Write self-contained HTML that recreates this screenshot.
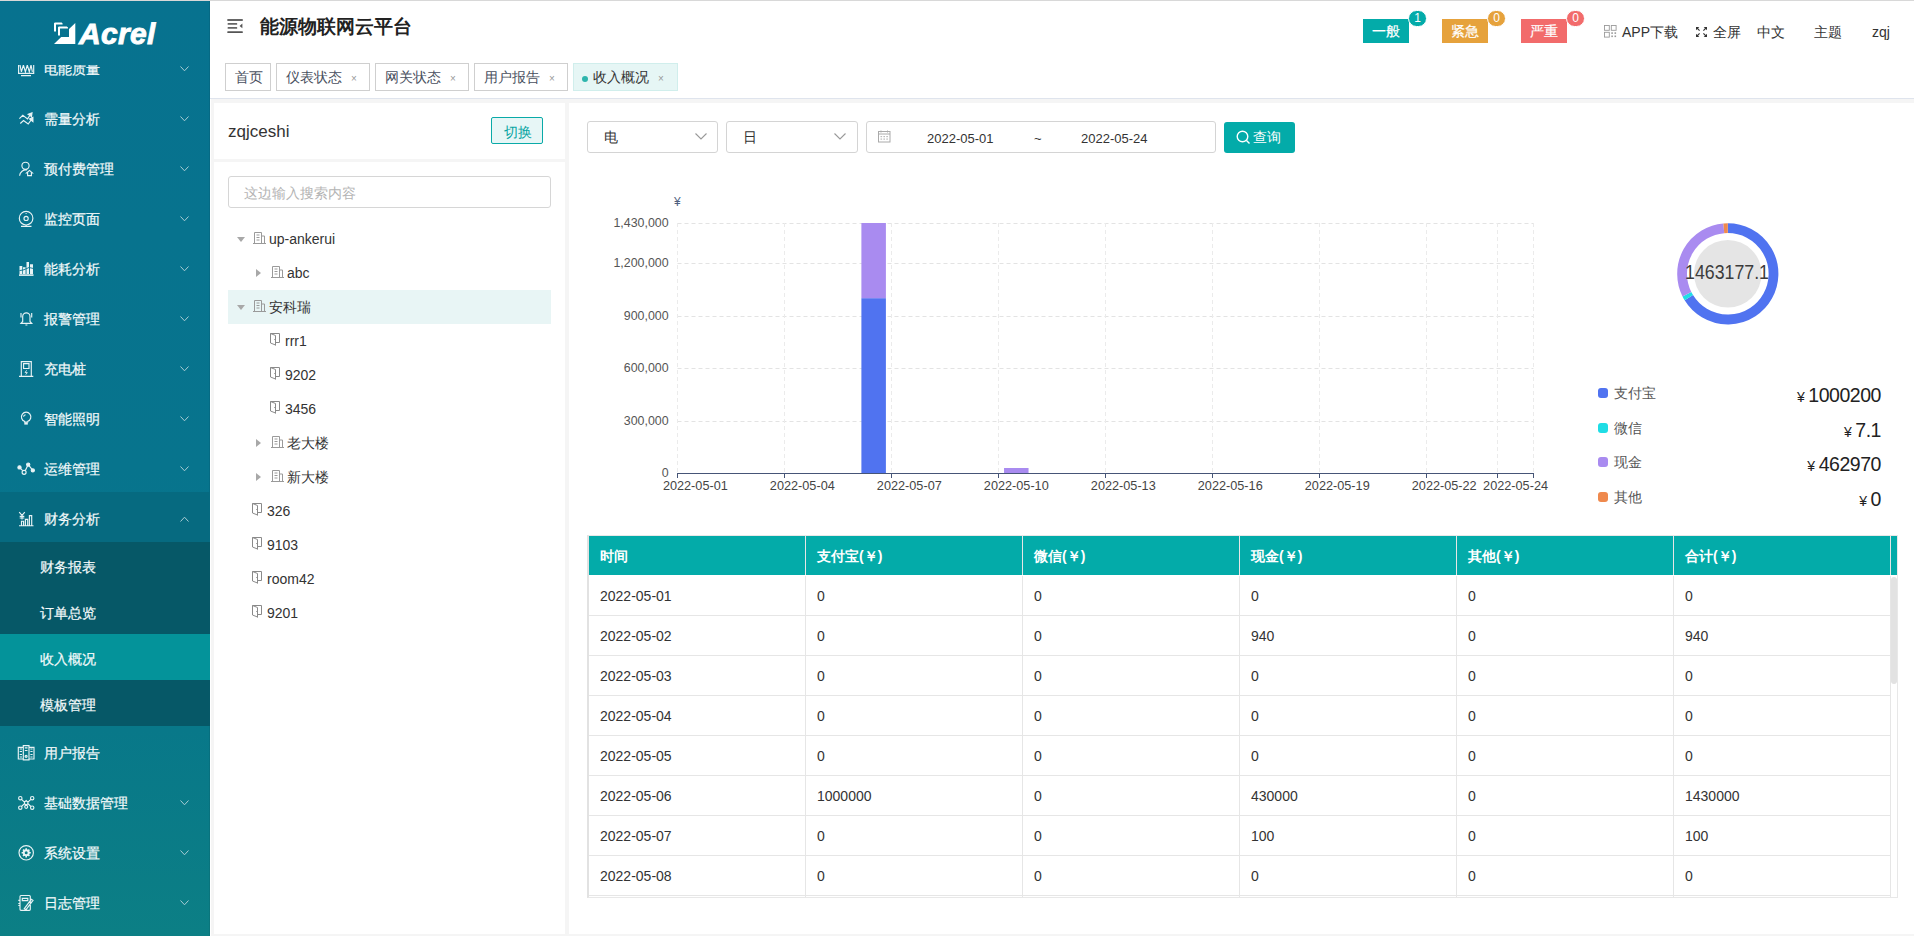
<!DOCTYPE html>
<html><head><meta charset="utf-8">
<style>
*{box-sizing:border-box;margin:0;padding:0}
html,body{width:1914px;height:936px;overflow:hidden}
body{position:relative;background:#f5f5f5;font-family:"Liberation Sans",sans-serif;font-size:14px;color:#333}
.abs{position:absolute}
#topline{left:0;top:0;width:1914px;height:1px;background:#d8d8d8;z-index:5}
/* sidebar */
#side{left:0;top:0;width:210px;height:936px;background:linear-gradient(180deg,#07728f 0%,#07748d 50%,#087889 78%,#0c7f85 100%);overflow:hidden}
#side .edge{right:0;top:0;width:1px;height:936px;background:rgba(0,0,0,0.07)}
.logo{left:54px;top:22px}
.menu{left:0;top:65px;width:210px;height:871px;overflow:hidden}
.mi{position:absolute;left:0;width:210px;height:50px;color:#f4fafb;-webkit-text-stroke:0.2px #f4fafb}
.mi .tx{position:absolute;left:44px;top:2px;line-height:50px;font-size:14px}
.mi svg.ic{position:absolute;left:16px;top:16px}
.mi .chev{position:absolute;left:180px;top:24px;width:9px;height:6px}
.sub{position:absolute;left:0;width:210px;height:46px;background:#065867;color:#f4fafb;-webkit-text-stroke:0.2px #f4fafb}
.sub .tx{position:absolute;left:40px;top:2px;line-height:46px;font-size:14px}
/* header */
#hdr{left:210px;top:0;width:1704px;height:99px;background:#fff;border-bottom:1px solid #dfe4ed}
.title{left:50px;top:14px;font-size:19px;font-weight:bold;color:#222;line-height:26px}
.tab{position:absolute;top:63px;height:28px;border:1px solid #cfcfcf;background:#fff;font-size:14px;color:#495060;line-height:26px;padding-left:9px}
.tab .x{position:absolute;font-size:10px;color:#999;top:1.5px}
.badge{position:absolute;top:19px;width:46px;height:24px;color:#fff;font-size:14px;line-height:24px;text-align:center;-webkit-text-stroke:0.2px #fff}
.cnt{position:absolute;top:10px;width:19px;height:17px;border-radius:9px;border:1px solid #fff;color:#fff;font-size:12px;line-height:15px;text-align:center}
.hr{position:absolute;top:22px;font-size:14px;color:#333;line-height:20px}
/* panels */
.pnl{position:absolute;background:#fff}
.tree{position:absolute;left:228px;width:323px;height:34px;line-height:34px;font-size:14px;color:#333}
.tree .car{position:absolute;top:15px;width:0;height:0}
.car.dn{border-left:4px solid transparent;border-right:4px solid transparent;border-top:5px solid #a8a8a8}
.car.rt{border-top:4px solid transparent;border-bottom:4px solid transparent;border-left:5px solid #a8a8a8}

.tree .t{position:absolute;top:0}
.sel{position:absolute;top:121px;height:32px;border:1px solid #d4d4d4;border-radius:3px;background:#fff}
.sel .v{position:absolute;left:16px;top:0;line-height:30px;font-size:14px;color:#333}
.lg{position:absolute;left:1598px;width:10px;height:10px;border-radius:3px}
.lgt{position:absolute;left:1614px;font-size:14px;color:#555;line-height:20px}
.lgv{position:absolute;right:33px;font-size:19.5px;letter-spacing:-0.45px;color:#222;line-height:24px;text-align:right}
.lgv small{font-size:14px;margin-right:3.5px;letter-spacing:0}
/* table */
#tbl{left:587px;top:535px;width:1311px;height:363px;border:1px solid #e8e8e8;border-left:2px solid #e2e2e2;background:#fff;overflow:hidden}
.th{position:absolute;top:0;height:39px;background:#03aba9;color:#fff;font-weight:bold;font-size:14px;line-height:40px;padding-left:11px}
.td{position:absolute;height:40px;line-height:41px;font-size:14px;color:#333;padding-left:11px;border-bottom:1px solid #e6e6e6;border-right:1px solid #e6e6e6}
</style></head>
<body>
<div id="topline" class="abs"></div>

<!-- SIDEBAR -->
<div id="side" class="abs">
  <div class="edge abs"></div>
  <svg class="logo abs" width="106" height="24" viewBox="0 0 106 24">
    <g fill="#fff">
      <path d="M0 9.5V1.2L0.8 0.5H7.6L8.6 1.6V2.5H2V9.5Z"></path>
      <path d="M4 13.5V5.2L4.8 4.5H12.8L14 5.6V6.5H6V13.5Z"></path>
      <path d="M0 22L7.2 15H15V7L21.3 1V22Z"></path>
    </g>
    <text x="25" y="21.6" font-family="Liberation Sans" font-weight="bold" font-style="italic" font-size="30" fill="#fff" stroke="#fff" stroke-width="0.9" letter-spacing="0.3">Acrel</text>
  </svg>
  <div class="menu abs" id="menu"><div class="mi" style="top:-23px;"><svg class="ic" width="20" height="20" viewBox="0 0 20 20"><g fill="none" stroke="#e8f3f5" stroke-width="1.15"><path d="M2.6 6V15.4H17.7V6M3.9 6.5L5.4 13.8 7.4 7 9.4 13.8 11.3 7 13.3 13.8 15 7 16.4 13.8M5 17.6H15"></path></g></svg><span class="tx">电能质量</span><svg class="chev" viewBox="0 0 9 6"><path d="M0.5 0.5L4.5 4.8L8.5 0.5" fill="none" stroke="#a9cdd4" stroke-width="1"></path></svg></div><div class="mi" style="top:27px;"><svg class="ic" width="20" height="20" viewBox="0 0 20 20"><g fill="none" stroke="#e8f3f5" stroke-width="1.15"><path d="M3.4 10.7L6.8 7.3 11.5 10.9 14 7.2M4.3 15.5L7.5 12.5 12.2 16 15.2 11.8"></path><path d="M12.2 6.3L16 4.8 15.5 8.6ZM13.5 11L16.9 9.5 16.9 13.5Z" fill="#e8f3f5"></path></g></svg><span class="tx">需量分析</span><svg class="chev" viewBox="0 0 9 6"><path d="M0.5 0.5L4.5 4.8L8.5 0.5" fill="none" stroke="#a9cdd4" stroke-width="1"></path></svg></div><div class="mi" style="top:77px;"><svg class="ic" width="20" height="20" viewBox="0 0 20 20"><g fill="none" stroke="#e8f3f5" stroke-width="1.15"><circle cx="9.5" cy="7.8" r="3.6"></circle><path d="M3.6 17.8A6.4 6.4 0 0 1 11 12M10.6 15L13.5 12.4 16.4 15H15.4V17.6H11.6V15Z"></path></g></svg><span class="tx">预付费管理</span><svg class="chev" viewBox="0 0 9 6"><path d="M0.5 0.5L4.5 4.8L8.5 0.5" fill="none" stroke="#a9cdd4" stroke-width="1"></path></svg></div><div class="mi" style="top:127px;"><svg class="ic" width="20" height="20" viewBox="0 0 20 20"><g fill="none" stroke="#e8f3f5" stroke-width="1.15"><circle cx="10.1" cy="10.2" r="6.8"></circle><circle cx="10.1" cy="10.4" r="2.1"></circle><path d="M5 18.4H15.5M10.1 17V18.4M9.6 5.5H10.6"></path></g></svg><span class="tx">监控页面</span><svg class="chev" viewBox="0 0 9 6"><path d="M0.5 0.5L4.5 4.8L8.5 0.5" fill="none" stroke="#a9cdd4" stroke-width="1"></path></svg></div><div class="mi" style="top:177px;"><svg class="ic" width="20" height="20" viewBox="0 0 20 20"><g fill="none" stroke="#e8f3f5" stroke-width="1.15"><path d="M3.5 8H6.3V16H3.5ZM7 9.3H9.6V16H7ZM10.5 4H13V16H10.5ZM14 6.3H17V16H14Z" fill="#e8f3f5" stroke="none"></path><path d="M3 17.1H17.5" stroke-width="1.6"></path><path d="M3.5 12.6L7 12 9.7 11 13 9.5 17 10.4" stroke="#07738e" stroke-width="0.9"></path></g></svg><span class="tx">能耗分析</span><svg class="chev" viewBox="0 0 9 6"><path d="M0.5 0.5L4.5 4.8L8.5 0.5" fill="none" stroke="#a9cdd4" stroke-width="1"></path></svg></div><div class="mi" style="top:227px;"><svg class="ic" width="20" height="20" viewBox="0 0 20 20"><g fill="none" stroke="#e8f3f5" stroke-width="1.15"><path d="M5 15.3H15.7L14 13.5V8.5A3.6 3.6 0 0 0 6.7 8.5V13.5ZM9.4 17H11.4M5 5V9.5M15.7 5V9.5"></path></g></svg><span class="tx">报警管理</span><svg class="chev" viewBox="0 0 9 6"><path d="M0.5 0.5L4.5 4.8L8.5 0.5" fill="none" stroke="#a9cdd4" stroke-width="1"></path></svg></div><div class="mi" style="top:277px;"><svg class="ic" width="20" height="20" viewBox="0 0 20 20"><g fill="none" stroke="#e8f3f5" stroke-width="1.15"><path d="M5.3 18.3V3.6H15.3V18.3M3 18.4H17.3M7.6 5.6H13V10.5H7.6Z"></path><path d="M10.6 12.3L9.1 14.6H11.3L9.8 16.6" stroke-width="0.9"></path></g></svg><span class="tx">充电桩</span><svg class="chev" viewBox="0 0 9 6"><path d="M0.5 0.5L4.5 4.8L8.5 0.5" fill="none" stroke="#a9cdd4" stroke-width="1"></path></svg></div><div class="mi" style="top:327px;"><svg class="ic" width="20" height="20" viewBox="0 0 20 20"><g fill="none" stroke="#e8f3f5" stroke-width="1.15"><path d="M8.5 14V13.3A4.7 4.7 0 1 1 11.8 13.3V14Z"></path><rect x="8.3" y="14.2" width="3.5" height="2.4" fill="#e8f3f5" stroke="none"></rect><path d="M7.5 8.6A2.6 2.6 0 0 1 9.6 6.7"></path></g></svg><span class="tx">智能照明</span><svg class="chev" viewBox="0 0 9 6"><path d="M0.5 0.5L4.5 4.8L8.5 0.5" fill="none" stroke="#a9cdd4" stroke-width="1"></path></svg></div><div class="mi" style="top:377px;"><svg class="ic" width="20" height="20" viewBox="0 0 20 20"><g fill="none" stroke="#e8f3f5" stroke-width="1.15"><path d="M3.5 9.4L6.7 12.7M9.2 12.8L12.2 6.6 16.8 12.3"></path><circle cx="3.5" cy="9.4" r="1.6" fill="#e8f3f5"></circle><circle cx="8.1" cy="14.3" r="2"></circle><circle cx="12.2" cy="6.6" r="1.6" fill="#e8f3f5"></circle><circle cx="16.8" cy="12.3" r="1.6" fill="#e8f3f5"></circle></g></svg><span class="tx">运维管理</span><svg class="chev" viewBox="0 0 9 6"><path d="M0.5 0.5L4.5 4.8L8.5 0.5" fill="none" stroke="#a9cdd4" stroke-width="1"></path></svg></div><div class="mi" style="top:427px;background:#066a80;"><svg class="ic" width="20" height="20" viewBox="0 0 20 20"><g fill="none" stroke="#e8f3f5" stroke-width="1.15"><path d="M3 17.7H17.5M5.5 17.5V13.2H7.6V17.5M9.4 17.5V11.3H11.7V17.5M13.4 17.5V7.6H15.7V17.5M3.2 4.2L6 7.3 8.8 4.2M6 7.3V11.5M3.7 8.3H8.3M3.7 10H8.3"></path></g></svg><span class="tx">财务分析</span><svg class="chev" viewBox="0 0 9 6"><path d="M0.5 5.5L4.5 1.2L8.5 5.5" fill="none" stroke="#a9cdd4" stroke-width="1"></path></svg></div><div class="mi" style="top:661px;"><svg class="ic" width="20" height="20" viewBox="0 0 20 20"><g fill="none" stroke="#e8f3f5" stroke-width="1.15"><path d="M2.3 5.3H7.3V17H2.3ZM7.3 3.6H13V17.8H7.3ZM13 5.3H18V17H13ZM8.8 5.8H11.5M8.8 8.5H11.5M3.7 7H6M14.4 7H16.6M3.7 9.5H6M14.4 9.5H16.6M3.7 12.5H6M14.4 12.5H16.6M3.7 15H6M14.4 15H16.6"></path><circle cx="10.1" cy="14.3" r="1"></circle></g></svg><span class="tx">用户报告</span></div><div class="mi" style="top:711px;"><svg class="ic" width="20" height="20" viewBox="0 0 20 20"><g fill="none" stroke="#e8f3f5" stroke-width="1.15"><circle cx="4.3" cy="6.2" r="1.7"></circle><circle cx="16.2" cy="6.2" r="1.7"></circle><circle cx="4.3" cy="15.7" r="1.7"></circle><circle cx="16.2" cy="15.7" r="1.7"></circle><circle cx="10.2" cy="14.8" r="1.5"></circle><path d="M5.5 7.4L8.5 10.2M14.9 7.4L11.9 10.2M5.5 14.5L8.5 11.6M14.9 14.5L11.9 11.6M8.5 10.2L10.2 8.6 11.9 10.2 11.9 11.6 10.2 13.2 8.5 11.6Z"></path></g></svg><span class="tx">基础数据管理</span><svg class="chev" viewBox="0 0 9 6"><path d="M0.5 0.5L4.5 4.8L8.5 0.5" fill="none" stroke="#a9cdd4" stroke-width="1"></path></svg></div><div class="mi" style="top:761px;"><svg class="ic" width="20" height="20" viewBox="0 0 20 20"><g fill="none" stroke="#e8f3f5" stroke-width="1.15"><circle cx="10.2" cy="10.8" r="7.2"></circle><circle cx="10.2" cy="10.8" r="2.5" stroke-width="2"></circle><path d="M10.2 6.2V8.2M10.2 13.4V15.4M5.6 10.8H7.6M12.8 10.8H14.8M7 7.6L8.4 9M12 12.6L13.4 14M13.4 7.6L12 9M7 14L8.4 12.6" stroke-width="1.6"></path></g></svg><span class="tx">系统设置</span><svg class="chev" viewBox="0 0 9 6"><path d="M0.5 0.5L4.5 4.8L8.5 0.5" fill="none" stroke="#a9cdd4" stroke-width="1"></path></svg></div><div class="mi" style="top:811px;"><svg class="ic" width="20" height="20" viewBox="0 0 20 20"><g fill="none" stroke="#e8f3f5" stroke-width="1.15"><path d="M4 4.5A1 1 0 0 1 5 3.5H13.3A1 1 0 0 1 14.3 4.5V17.3A1 1 0 0 1 13.3 18.3H5A1 1 0 0 1 4 17.3ZM6.3 6.3H11.8V8.6H6.3ZM2.3 8.3H4.5M2.3 11.5H4.5M2.3 13.5H4.5M8.3 16.6L15.3 7.3 17 8.4 10 17.7Z"></path></g></svg><span class="tx">日志管理</span><svg class="chev" viewBox="0 0 9 6"><path d="M0.5 0.5L4.5 4.8L8.5 0.5" fill="none" stroke="#a9cdd4" stroke-width="1"></path></svg></div><div class="sub" style="top:477px;"><span class="tx">财务报表</span></div><div class="sub" style="top:523px;"><span class="tx">订单总览</span></div><div class="sub" style="top:569px;background:#04939a;"><span class="tx">收入概况</span></div><div class="sub" style="top:615px;"><span class="tx">模板管理</span></div></div>
</div>

<!-- HEADER -->
<div id="hdr" class="abs">
  <svg class="abs" style="left:17px;top:19px" width="17" height="15" viewBox="0 0 17 15">
    <g fill="#666"><rect x="0.3" y="0.1" width="15.5" height="1.8" rx="0.5"></rect><rect x="0.6" y="4.1" width="9.6" height="1.7" rx="0.5"></rect><rect x="0.6" y="8.1" width="9.6" height="1.7" rx="0.5"></rect><rect x="0.3" y="12.2" width="15.5" height="1.8" rx="0.5" fill="#555"></rect><path d="M12.6 6.9L15.4 4.4V9.3Z" fill="#555"></path></g>
  </svg>
  <div class="title abs">能源物联网云平台</div>
  <div class="tab" style="left:15px;width:46px">首页</div>
  <div class="tab" style="left:66px;width:94px">仪表状态<span class="x" style="left:74px">×</span></div>
  <div class="tab" style="left:165px;width:94px">网关状态<span class="x" style="left:74px">×</span></div>
  <div class="tab" style="left:264px;width:94px">用户报告<span class="x" style="left:74px">×</span></div>
  <div class="tab" style="left:363px;width:105px;background:#e6f6f5;border-color:#d0eeec;color:#333;padding-left:19px"><span class="abs" style="left:8px;top:12px;width:6px;height:6px;border-radius:3px;background:#2fb5ad"></span>收入概况<span class="x" style="left:84px">×</span></div>

  <div class="badge" style="left:1153px;background:#03aba9">一般</div>
  <div class="cnt" style="left:1198px;background:#03aba9">1</div>
  <div class="badge" style="left:1232px;background:#e6a23c">紧急</div>
  <div class="cnt" style="left:1277px;background:#e6a23c">0</div>
  <div class="badge" style="left:1311px;background:#f26b6b">严重</div>
  <div class="cnt" style="left:1356px;background:#f26b6b">0</div>

  <svg class="abs" style="left:1394px;top:25px" width="13" height="13" viewBox="0 0 13 13"><g fill="none" stroke="#9a9a9a" stroke-width="0.9"><rect x="0.5" y="0.5" width="4.8" height="4.8"></rect><rect x="7.3" y="0.5" width="4.8" height="4.8"></rect><rect x="0.5" y="7.3" width="4.8" height="4.8"></rect></g><g fill="#9a9a9a"><rect x="7.3" y="7.3" width="1.6" height="1.6"></rect><rect x="10.5" y="7.3" width="1.6" height="1.6"></rect><rect x="7.3" y="10.5" width="1.6" height="1.6"></rect><rect x="10.5" y="10.5" width="1.6" height="1.6"></rect></g></svg>
  <div class="hr" style="left:1412px">APP下载</div>
  <svg class="abs" style="left:1486px;top:27px" width="11" height="10" viewBox="0 0 11 10"><g fill="#333"><path d="M0 0h3.3L0 3.3z"></path><path d="M11 0H7.7L11 3.3z"></path><path d="M0 10h3.3L0 6.7z"></path><path d="M11 10H7.7L11 6.7z"></path></g><g stroke="#333" stroke-width="1.1"><path d="M1 1l2.6 2.6M10 1L7.4 3.6M1 9l2.6-2.6M10 9L7.4 6.4"></path></g></svg>
  <div class="hr" style="left:1503px">全屏</div>
  <div class="hr" style="left:1547px">中文</div>
  <div class="hr" style="left:1604px">主题</div>
  <div class="hr" style="left:1662px">zqj</div>
</div>

<!-- LEFT PANEL -->
<div class="abs" style="left:210px;top:99px;width:1px;height:837px;background:#fff"></div>
<div class="pnl" style="left:214px;top:103px;width:351px;height:56px"></div>
<div class="abs" style="left:228px;top:120px;font-size:17px;line-height:24px;color:#333">zqjceshi</div>
<div class="abs" style="left:491px;top:117px;width:52px;height:27px;border:1px solid #0aaaa8;border-radius:2px;background:#e7f6f6;color:#0aa5a3;font-size:14px;line-height:28px;text-align:center;padding-left:2px">切换</div>
<div class="pnl" style="left:214px;top:162px;width:351px;height:772px"></div>
<div class="abs" style="left:228px;top:176px;width:323px;height:32px;border:1px solid #d6d6d6;border-radius:3px;background:#fff;color:#b4b4b4;font-size:14px;line-height:32px;padding-left:15px">这边输入搜索内容</div>
<div id="tree"><div class="tree" style="top:222px;"><span class="car dn" style="left:9px;top:15px"></span><span style="position:absolute;left:25px;top:10px"><svg width="13" height="12" viewBox="0 0 13 12" style="display:block"><g fill="none" stroke="#9a9a9a" stroke-width="1"><path d="M1.5 11V0.5h7V11M8.5 4h3V11M0 11.5h13M3.5 3h3M3.5 5.5h3M3.5 8h3"></path></g></svg></span><span class="t" style="left:41px;top:0px">up-ankerui</span></div><div class="tree" style="top:256px;"><span class="car rt" style="left:28px;top:13px"></span><span style="position:absolute;left:43px;top:10px"><svg width="13" height="12" viewBox="0 0 13 12" style="display:block"><g fill="none" stroke="#9a9a9a" stroke-width="1"><path d="M1.5 11V0.5h7V11M8.5 4h3V11M0 11.5h13M3.5 3h3M3.5 5.5h3M3.5 8h3"></path></g></svg></span><span class="t" style="left:59px;top:0px">abc</span></div><div class="tree" style="top:290px;background:#e8f5f5;"><span class="car dn" style="left:9px;top:15px"></span><span style="position:absolute;left:25px;top:10px"><svg width="13" height="12" viewBox="0 0 13 12" style="display:block"><g fill="none" stroke="#9a9a9a" stroke-width="1"><path d="M1.5 11V0.5h7V11M8.5 4h3V11M0 11.5h13M3.5 3h3M3.5 5.5h3M3.5 8h3"></path></g></svg></span><span class="t" style="left:41px;top:0px">安科瑞</span></div><div class="tree" style="top:324px;"><span style="position:absolute;left:42px;top:9px"><svg width="11" height="13" viewBox="0 0 11 13" style="display:block"><g fill="none" stroke="#8a8a8a" stroke-width="1"><path d="M5.5 9.5h4v-9h-9v9.5l5 2zM0.5 0.5l5 2v10M4.3 6.5h1"></path></g></svg></span><span class="t" style="left:57px;top:0px">rrr1</span></div><div class="tree" style="top:358px;"><span style="position:absolute;left:42px;top:9px"><svg width="11" height="13" viewBox="0 0 11 13" style="display:block"><g fill="none" stroke="#8a8a8a" stroke-width="1"><path d="M5.5 9.5h4v-9h-9v9.5l5 2zM0.5 0.5l5 2v10M4.3 6.5h1"></path></g></svg></span><span class="t" style="left:57px;top:0px">9202</span></div><div class="tree" style="top:392px;"><span style="position:absolute;left:42px;top:9px"><svg width="11" height="13" viewBox="0 0 11 13" style="display:block"><g fill="none" stroke="#8a8a8a" stroke-width="1"><path d="M5.5 9.5h4v-9h-9v9.5l5 2zM0.5 0.5l5 2v10M4.3 6.5h1"></path></g></svg></span><span class="t" style="left:57px;top:0px">3456</span></div><div class="tree" style="top:426px;"><span class="car rt" style="left:28px;top:13px"></span><span style="position:absolute;left:43px;top:10px"><svg width="13" height="12" viewBox="0 0 13 12" style="display:block"><g fill="none" stroke="#9a9a9a" stroke-width="1"><path d="M1.5 11V0.5h7V11M8.5 4h3V11M0 11.5h13M3.5 3h3M3.5 5.5h3M3.5 8h3"></path></g></svg></span><span class="t" style="left:59px;top:0px">老大楼</span></div><div class="tree" style="top:460px;"><span class="car rt" style="left:28px;top:13px"></span><span style="position:absolute;left:43px;top:10px"><svg width="13" height="12" viewBox="0 0 13 12" style="display:block"><g fill="none" stroke="#9a9a9a" stroke-width="1"><path d="M1.5 11V0.5h7V11M8.5 4h3V11M0 11.5h13M3.5 3h3M3.5 5.5h3M3.5 8h3"></path></g></svg></span><span class="t" style="left:59px;top:0px">新大楼</span></div><div class="tree" style="top:494px;"><span style="position:absolute;left:24px;top:9px"><svg width="11" height="13" viewBox="0 0 11 13" style="display:block"><g fill="none" stroke="#8a8a8a" stroke-width="1"><path d="M5.5 9.5h4v-9h-9v9.5l5 2zM0.5 0.5l5 2v10M4.3 6.5h1"></path></g></svg></span><span class="t" style="left:39px;top:0px">326</span></div><div class="tree" style="top:528px;"><span style="position:absolute;left:24px;top:9px"><svg width="11" height="13" viewBox="0 0 11 13" style="display:block"><g fill="none" stroke="#8a8a8a" stroke-width="1"><path d="M5.5 9.5h4v-9h-9v9.5l5 2zM0.5 0.5l5 2v10M4.3 6.5h1"></path></g></svg></span><span class="t" style="left:39px;top:0px">9103</span></div><div class="tree" style="top:562px;"><span style="position:absolute;left:24px;top:9px"><svg width="11" height="13" viewBox="0 0 11 13" style="display:block"><g fill="none" stroke="#8a8a8a" stroke-width="1"><path d="M5.5 9.5h4v-9h-9v9.5l5 2zM0.5 0.5l5 2v10M4.3 6.5h1"></path></g></svg></span><span class="t" style="left:39px;top:0px">room42</span></div><div class="tree" style="top:596px;"><span style="position:absolute;left:24px;top:9px"><svg width="11" height="13" viewBox="0 0 11 13" style="display:block"><g fill="none" stroke="#8a8a8a" stroke-width="1"><path d="M5.5 9.5h4v-9h-9v9.5l5 2zM0.5 0.5l5 2v10M4.3 6.5h1"></path></g></svg></span><span class="t" style="left:39px;top:0px">9201</span></div></div>

<!-- RIGHT PANEL -->
<div class="pnl" style="left:569px;top:103px;width:1345px;height:831px"></div>
<div class="sel" style="left:587px;width:131px"><span class="v">电</span>
  <svg class="abs" style="left:107px;top:11px" width="12" height="7" viewBox="0 0 12 7"><path d="M0.5 0.5 L6 6 L11.5 0.5" fill="none" stroke="#999" stroke-width="1.1"></path></svg></div>
<div class="sel" style="left:726px;width:132px"><span class="v">日</span>
  <svg class="abs" style="left:107px;top:11px" width="12" height="7" viewBox="0 0 12 7"><path d="M0.5 0.5 L6 6 L11.5 0.5" fill="none" stroke="#999" stroke-width="1.1"></path></svg></div>
<div class="sel" style="left:866px;width:350px">
  <svg class="abs" style="left:11px;top:8px" width="13" height="13" viewBox="0 0 13 13"><g fill="none" stroke="#aaa" stroke-width="1"><rect x="0.5" y="1.5" width="11.5" height="10.5"></rect><path d="M0.5 4h11.5M3 0.5v2M9.5 0.5v2"></path></g><g fill="#bbb"><rect x="2.5" y="6" width="1.6" height="1.2"></rect><rect x="5.4" y="6" width="1.6" height="1.2"></rect><rect x="8.3" y="6" width="1.6" height="1.2"></rect><rect x="2.5" y="8.5" width="1.6" height="1.2"></rect><rect x="5.4" y="8.5" width="1.6" height="1.2"></rect><rect x="8.3" y="8.5" width="1.6" height="1.2"></rect></g></svg>
  <span class="abs" style="left:60px;top:1.5px;line-height:30px;font-size:13px;color:#333">2022-05-01</span>
  <span class="abs" style="left:167px;top:1.5px;line-height:30px;font-size:13px;color:#333">~</span>
  <span class="abs" style="left:214px;top:1.5px;line-height:30px;font-size:13px;color:#333">2022-05-24</span>
</div>
<div class="abs" style="left:1224px;top:122px;width:71px;height:31px;background:#03aba9;border-radius:3px;color:#fff;font-size:14px;line-height:31px">
  <svg class="abs" style="left:12px;top:8px" width="15" height="15" viewBox="0 0 15 15"><g fill="none" stroke="#fff" stroke-width="1.4"><circle cx="6.5" cy="6.5" r="5.3"></circle><path d="M10.5 10.5L13.5 13.5"></path></g></svg>
  <span class="abs" style="left:29px;top:0">查询</span>
</div>

<!-- CHART -->
<svg class="abs" style="left:569px;top:180px" width="1000" height="320" id="chart"><text x="99.60000000000002" y="296.5" text-anchor="end" font-size="12.4" fill="#555" font-family="Liberation Sans">0</text><line x1="108.5" x2="964.4000000000001" y1="241.5" y2="241.5" stroke="#e3e3e3" stroke-dasharray="4,3"></line><text x="99.60000000000002" y="244.5" text-anchor="end" font-size="12.4" fill="#555" font-family="Liberation Sans">300,000</text><line x1="108.5" x2="964.4000000000001" y1="188.5" y2="188.5" stroke="#e3e3e3" stroke-dasharray="4,3"></line><text x="99.60000000000002" y="191.5" text-anchor="end" font-size="12.4" fill="#555" font-family="Liberation Sans">600,000</text><line x1="108.5" x2="964.4000000000001" y1="136.5" y2="136.5" stroke="#e3e3e3" stroke-dasharray="4,3"></line><text x="99.60000000000002" y="139.5" text-anchor="end" font-size="12.4" fill="#555" font-family="Liberation Sans">900,000</text><line x1="108.5" x2="964.4000000000001" y1="83.5" y2="83.5" stroke="#e3e3e3" stroke-dasharray="4,3"></line><text x="99.60000000000002" y="86.5" text-anchor="end" font-size="12.4" fill="#555" font-family="Liberation Sans">1,200,000</text><line x1="108.5" x2="964.4000000000001" y1="43.5" y2="43.5" stroke="#e3e3e3" stroke-dasharray="4,3"></line><text x="99.60000000000002" y="46.5" text-anchor="end" font-size="12.4" fill="#555" font-family="Liberation Sans">1,430,000</text><line x1="108.5" x2="108.5" y1="43" y2="293" stroke="#ebebeb" stroke-dasharray="4,3"></line><line x1="108.5" x2="108.5" y1="293" y2="298" stroke="#465577"></line><line x1="215.5" x2="215.5" y1="43" y2="293" stroke="#ebebeb" stroke-dasharray="4,3"></line><line x1="215.5" x2="215.5" y1="293" y2="298" stroke="#465577"></line><line x1="322.5" x2="322.5" y1="43" y2="293" stroke="#ebebeb" stroke-dasharray="4,3"></line><line x1="322.5" x2="322.5" y1="293" y2="298" stroke="#465577"></line><line x1="429.5" x2="429.5" y1="43" y2="293" stroke="#ebebeb" stroke-dasharray="4,3"></line><line x1="429.5" x2="429.5" y1="293" y2="298" stroke="#465577"></line><line x1="536.5" x2="536.5" y1="43" y2="293" stroke="#ebebeb" stroke-dasharray="4,3"></line><line x1="536.5" x2="536.5" y1="293" y2="298" stroke="#465577"></line><line x1="643.5" x2="643.5" y1="43" y2="293" stroke="#ebebeb" stroke-dasharray="4,3"></line><line x1="643.5" x2="643.5" y1="293" y2="298" stroke="#465577"></line><line x1="750.5" x2="750.5" y1="43" y2="293" stroke="#ebebeb" stroke-dasharray="4,3"></line><line x1="750.5" x2="750.5" y1="293" y2="298" stroke="#465577"></line><line x1="857.5" x2="857.5" y1="43" y2="293" stroke="#ebebeb" stroke-dasharray="4,3"></line><line x1="857.5" x2="857.5" y1="293" y2="298" stroke="#465577"></line><line x1="928.5" x2="928.5" y1="43" y2="293" stroke="#ebebeb" stroke-dasharray="4,3"></line><line x1="928.5" x2="928.5" y1="293" y2="298" stroke="#465577"></line><line x1="964.5" x2="964.5" y1="43" y2="293" stroke="#ebebeb" stroke-dasharray="4,3"></line><line x1="964.5" x2="964.5" y1="293" y2="298" stroke="#465577"></line><line x1="108.5" x2="964.4000000000001" y1="293.5" y2="293.5" stroke="#465577" stroke-width="1.2"></line><text x="126.33125" y="310" text-anchor="middle" font-size="12.7" fill="#444" font-family="Liberation Sans">2022-05-01</text><text x="233.31875000000002" y="310" text-anchor="middle" font-size="12.7" fill="#444" font-family="Liberation Sans">2022-05-04</text><text x="340.30625" y="310" text-anchor="middle" font-size="12.7" fill="#444" font-family="Liberation Sans">2022-05-07</text><text x="447.29375" y="310" text-anchor="middle" font-size="12.7" fill="#444" font-family="Liberation Sans">2022-05-10</text><text x="554.28125" y="310" text-anchor="middle" font-size="12.7" fill="#444" font-family="Liberation Sans">2022-05-13</text><text x="661.2687500000001" y="310" text-anchor="middle" font-size="12.7" fill="#444" font-family="Liberation Sans">2022-05-16</text><text x="768.25625" y="310" text-anchor="middle" font-size="12.7" fill="#444" font-family="Liberation Sans">2022-05-19</text><text x="875.24375" y="310" text-anchor="middle" font-size="12.7" fill="#444" font-family="Liberation Sans">2022-05-22</text><text x="946.56875" y="310" text-anchor="middle" font-size="12.7" fill="#444" font-family="Liberation Sans">2022-05-24</text><text x="108.29999999999995" y="25.5" text-anchor="middle" font-size="12" fill="#4f5f7f" font-family="Liberation Sans">¥</text><rect x="292.39375" y="118.17482517482517" width="24.5" height="174.82517482517483" fill="#5073f0"></rect><rect x="292.39375" y="43" width="24.5" height="75.17482517482517" fill="#a98bf0"></rect><rect x="435.04375000000005" y="288" width="24.5" height="5" fill="#a98bf0"></rect></svg>
<!-- DONUT -->
<svg class="abs" style="left:1667px;top:213px" width="120" height="120" viewBox="0 0 120 120" id="donut"><circle cx="60.8" cy="60.8" r="33.8" fill="#e5e5e5"></circle><path d="M60.8 15.099999999999994 A45.7 45.7 0 1 1 21.834344489017973 84.67818440751884" fill="none" stroke="#5073f0" stroke-width="9.8"></path><path d="M21.834344489017973 84.67818440751884 A45.7 45.7 0 0 1 19.90149967478746 81.19124005911829" fill="none" stroke="#1fdde5" stroke-width="9.8"></path><path d="M19.90149967478746 81.19124005911829 A45.7 45.7 0 0 1 56.81698255643201 15.273902297207222" fill="none" stroke="#a98bf0" stroke-width="9.8"></path><path d="M56.81698255643201 15.273902297207222 A45.7 45.7 0 0 1 60.79999999999998 15.099999999999994" fill="none" stroke="#ef894d" stroke-width="9.8"></path></svg>
<div class="abs" style="left:1667px;top:259px;width:120px;text-align:center;font-size:19.5px;color:#3c3c3c;line-height:26px;transform:scaleX(0.91)">1463177.1</div>

<div class="lg" style="top:388px;background:#5073f0"></div><div class="lgt" style="top:383px">支付宝</div>
<div class="lg" style="top:423px;background:#1fdde5"></div><div class="lgt" style="top:418px">微信</div>
<div class="lg" style="top:457px;background:#a98bf0"></div><div class="lgt" style="top:452px">现金</div>
<div class="lg" style="top:492px;background:#ef894d"></div><div class="lgt" style="top:487px">其他</div>
<div class="lgv" style="top:383px"><small>¥</small>1000200</div>
<div class="lgv" style="top:418px"><small>¥</small>7.1</div>
<div class="lgv" style="top:452px"><small>¥</small>462970</div>
<div class="lgv" style="top:487px"><small>¥</small>0</div>

<!-- TABLE -->
<div id="tbl" class="abs"><div class="th" style="left:0px;width:217px;border-right:1px solid #e6e6e6">时间</div><div class="th" style="left:217px;width:217px;border-right:1px solid #e6e6e6">支付宝(￥)</div><div class="th" style="left:434px;width:217px;border-right:1px solid #e6e6e6">微信(￥)</div><div class="th" style="left:651px;width:217px;border-right:1px solid #e6e6e6">现金(￥)</div><div class="th" style="left:868px;width:217px;border-right:1px solid #e6e6e6">其他(￥)</div><div class="th" style="left:1085px;width:217px;border-right:1px solid #e6e6e6">合计(￥)</div><div class="th" style="left:1302px;width:8px;padding:0"></div><div class="td" style="top:40px;left:0px;width:217px">2022-05-01</div><div class="td" style="top:40px;left:217px;width:217px">0</div><div class="td" style="top:40px;left:434px;width:217px">0</div><div class="td" style="top:40px;left:651px;width:217px">0</div><div class="td" style="top:40px;left:868px;width:217px">0</div><div class="td" style="top:40px;left:1085px;width:217px">0</div><div class="td" style="top:80px;left:0px;width:217px">2022-05-02</div><div class="td" style="top:80px;left:217px;width:217px">0</div><div class="td" style="top:80px;left:434px;width:217px">0</div><div class="td" style="top:80px;left:651px;width:217px">940</div><div class="td" style="top:80px;left:868px;width:217px">0</div><div class="td" style="top:80px;left:1085px;width:217px">940</div><div class="td" style="top:120px;left:0px;width:217px">2022-05-03</div><div class="td" style="top:120px;left:217px;width:217px">0</div><div class="td" style="top:120px;left:434px;width:217px">0</div><div class="td" style="top:120px;left:651px;width:217px">0</div><div class="td" style="top:120px;left:868px;width:217px">0</div><div class="td" style="top:120px;left:1085px;width:217px">0</div><div class="td" style="top:160px;left:0px;width:217px">2022-05-04</div><div class="td" style="top:160px;left:217px;width:217px">0</div><div class="td" style="top:160px;left:434px;width:217px">0</div><div class="td" style="top:160px;left:651px;width:217px">0</div><div class="td" style="top:160px;left:868px;width:217px">0</div><div class="td" style="top:160px;left:1085px;width:217px">0</div><div class="td" style="top:200px;left:0px;width:217px">2022-05-05</div><div class="td" style="top:200px;left:217px;width:217px">0</div><div class="td" style="top:200px;left:434px;width:217px">0</div><div class="td" style="top:200px;left:651px;width:217px">0</div><div class="td" style="top:200px;left:868px;width:217px">0</div><div class="td" style="top:200px;left:1085px;width:217px">0</div><div class="td" style="top:240px;left:0px;width:217px">2022-05-06</div><div class="td" style="top:240px;left:217px;width:217px">1000000</div><div class="td" style="top:240px;left:434px;width:217px">0</div><div class="td" style="top:240px;left:651px;width:217px">430000</div><div class="td" style="top:240px;left:868px;width:217px">0</div><div class="td" style="top:240px;left:1085px;width:217px">1430000</div><div class="td" style="top:280px;left:0px;width:217px">2022-05-07</div><div class="td" style="top:280px;left:217px;width:217px">0</div><div class="td" style="top:280px;left:434px;width:217px">0</div><div class="td" style="top:280px;left:651px;width:217px">100</div><div class="td" style="top:280px;left:868px;width:217px">0</div><div class="td" style="top:280px;left:1085px;width:217px">100</div><div class="td" style="top:320px;left:0px;width:217px">2022-05-08</div><div class="td" style="top:320px;left:217px;width:217px">0</div><div class="td" style="top:320px;left:434px;width:217px">0</div><div class="td" style="top:320px;left:651px;width:217px">0</div><div class="td" style="top:320px;left:868px;width:217px">0</div><div class="td" style="top:320px;left:1085px;width:217px">0</div><div class="td" style="top:360px;left:0px;width:217px">2022-05-09</div><div class="td" style="top:360px;left:217px;width:217px">0</div><div class="td" style="top:360px;left:434px;width:217px">0</div><div class="td" style="top:360px;left:651px;width:217px">0</div><div class="td" style="top:360px;left:868px;width:217px">0</div><div class="td" style="top:360px;left:1085px;width:217px">0</div><div class="abs" style="left:1302px;top:41px;width:6px;height:107px;background:#e2e2e2;border-radius:3px"></div></div>



</body></html>
